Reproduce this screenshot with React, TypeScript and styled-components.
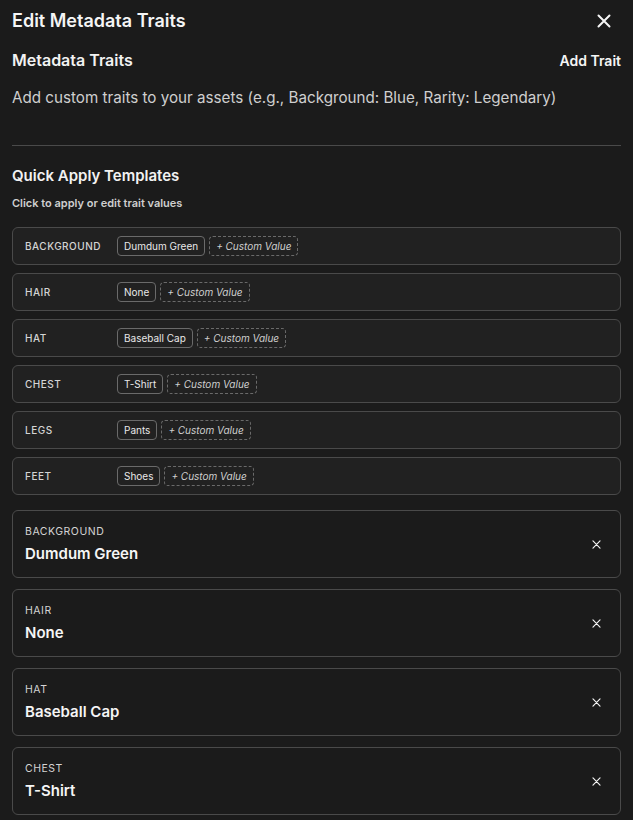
import React from 'react';
import styled, { createGlobalStyle } from 'styled-components';

const GlobalStyle = createGlobalStyle`
	* { box-sizing: border-box; }
	html, body {
		margin: 0;
		padding: 0;
		background: #1b1b1b;
	}
	body {
		font-family: Inter, 'Noto Sans', sans-serif;
		color: #f2f2f2;
	}
`;

const templates = [
	{ name: 'Background', value: 'Dumdum Green' },
	{ name: 'Hair', value: 'None' },
	{ name: 'Hat', value: 'Baseball Cap' },
	{ name: 'Chest', value: 'T-Shirt' },
	{ name: 'Legs', value: 'Pants' },
	{ name: 'Feet', value: 'Shoes' },
];

const traits = [
	{ name: 'Background', value: 'Dumdum Green' },
	{ name: 'Hair', value: 'None' },
	{ name: 'Hat', value: 'Baseball Cap' },
	{ name: 'Chest', value: 'T-Shirt' },
];

const CloseIcon = ({ size, stroke }: { size: number; stroke: number }) => (
	<svg width={size} height={size} viewBox='0 0 14 14' fill='none'>
		<path d='M1.5 1.5L12.5 12.5M12.5 1.5L1.5 12.5' stroke='currentColor' strokeWidth={stroke} strokeLinecap='round' />
	</svg>
);

export default function App() {
	return (
		<>
			<GlobalStyle />
			<Page>
				<Header>
					<Title>Edit Metadata Traits</Title>
					<IconButton $size={20}>
						<CloseIcon size={14} stroke={2} />
					</IconButton>
				</Header>

				<SectionHeader>
					<SectionTitle>Metadata Traits</SectionTitle>
					<TextButton>Add Trait</TextButton>
				</SectionHeader>
				<Description>Add custom traits to your assets (e.g., Background: Blue, Rarity: Legendary)</Description>

				<Divider />

				<SubTitle>Quick Apply Templates</SubTitle>
				<Hint>Click to apply or edit trait values</Hint>

				<TemplateList>
					{templates.map(t => (
						<TemplateRow key={t.name}>
							<TemplateLabel>{t.name}</TemplateLabel>
							<Chips>
								<Chip>{t.value}</Chip>
								<Chip $dashed>+ Custom Value</Chip>
							</Chips>
						</TemplateRow>
					))}
				</TemplateList>

				<TraitList>
					{traits.map(t => (
						<TraitCard key={t.name}>
							<TraitText>
								<TraitLabel>{t.name}</TraitLabel>
								<TraitValue>{t.value}</TraitValue>
							</TraitText>
							<IconButton $size={16}>
								<CloseIcon size={9} stroke={1.8} />
							</IconButton>
						</TraitCard>
					))}
				</TraitList>
			</Page>
		</>
	);
}

const Page = styled.div`
	padding: 8px 12px 12px;
	min-height: 820px;
	background: #1b1b1b;
`;

const Header = styled.div`
	display: flex;
	align-items: center;
	justify-content: space-between;
	height: 26px;
	padding-right: 7px;
`;

const Title = styled.h1`
	margin: 0;
	font-size: 18px;
	line-height: 26px;
	font-weight: 600;
	color: #f5f5f5;
`;

const IconButton = styled.button<{ $size: number }>`
	display: flex;
	align-items: center;
	justify-content: center;
	width: ${p => p.$size}px;
	height: ${p => p.$size}px;
	padding: 0;
	border: none;
	background: none;
	color: #f5f5f5;
	cursor: pointer;
`;

const SectionHeader = styled.div`
	display: flex;
	align-items: center;
	justify-content: space-between;
	margin-top: 14px;
	height: 24px;
`;

const SectionTitle = styled.h2`
	margin: 0;
	font-size: 16px;
	line-height: 24px;
	font-weight: 600;
	color: #f2f2f2;
`;

const TextButton = styled.button`
	padding: 0;
	border: none;
	background: none;
	font-family: inherit;
	font-size: 14px;
	font-weight: 600;
	color: #f5f5f5;
	cursor: pointer;
`;

const Description = styled.p`
	margin: 15px 0 0;
	font-size: 15.2px;
	line-height: 22px;
	color: #cfcfcf;
`;

const Divider = styled.hr`
	margin: 36px 0 0;
	border: none;
	border-top: 1px solid #4a4a4a;
`;

const SubTitle = styled.h3`
	margin: 19px 0 0;
	font-size: 15px;
	line-height: 22px;
	font-weight: 600;
	color: #f2f2f2;
`;

const Hint = styled.p`
	margin: 8px 0 0;
	font-size: 11px;
	line-height: 16px;
	font-weight: 600;
	color: #cfcfcf;
`;

const TemplateList = styled.div`
	display: flex;
	flex-direction: column;
	gap: 8px;
	margin-top: 16px;
`;

const TemplateRow = styled.div`
	display: flex;
	align-items: center;
	height: 38px;
	padding: 0 12px;
	border: 1px solid #4a4a4a;
	border-radius: 6px;
	background: #212121;
`;

const TemplateLabel = styled.span`
	width: 92px;
	flex-shrink: 0;
	font-size: 10px;
	letter-spacing: 0.05em;
	text-transform: uppercase;
	font-weight: 500;
	color: #d4d4d4;
`;

const Chips = styled.div`
	display: flex;
	align-items: center;
	gap: 4px;
`;

const Chip = styled.span<{ $dashed?: boolean }>`
	display: inline-flex;
	align-items: center;
	height: 20px;
	padding: 0 6px;
	border: 1px ${p => (p.$dashed ? 'dashed #6a6a6a' : 'solid #6a6a6a')};
	border-radius: 4px;
	font-size: 10px;
	font-style: ${p => (p.$dashed ? 'italic' : 'normal')};
	color: ${p => (p.$dashed ? '#cfcfcf' : '#e8e8e8')};
	white-space: nowrap;
`;

const TraitList = styled.div`
	display: flex;
	flex-direction: column;
	gap: 11px;
	margin-top: 15px;
`;

const TraitCard = styled.div`
	display: flex;
	align-items: center;
	justify-content: space-between;
	height: 68px;
	padding: 0 16px 0 12px;
	border: 1px solid #4a4a4a;
	border-radius: 6px;
	background: #1b1b1b;
`;

const TraitText = styled.div`
	display: flex;
	flex-direction: column;
	gap: 5px;
`;

const TraitLabel = styled.span`
	font-size: 10.5px;
	line-height: 14px;
	letter-spacing: 0.05em;
	text-transform: uppercase;
	color: #d4d4d4;
`;

const TraitValue = styled.span`
	font-size: 15px;
	line-height: 20px;
	font-weight: 600;
	color: #f5f5f5;
`;
